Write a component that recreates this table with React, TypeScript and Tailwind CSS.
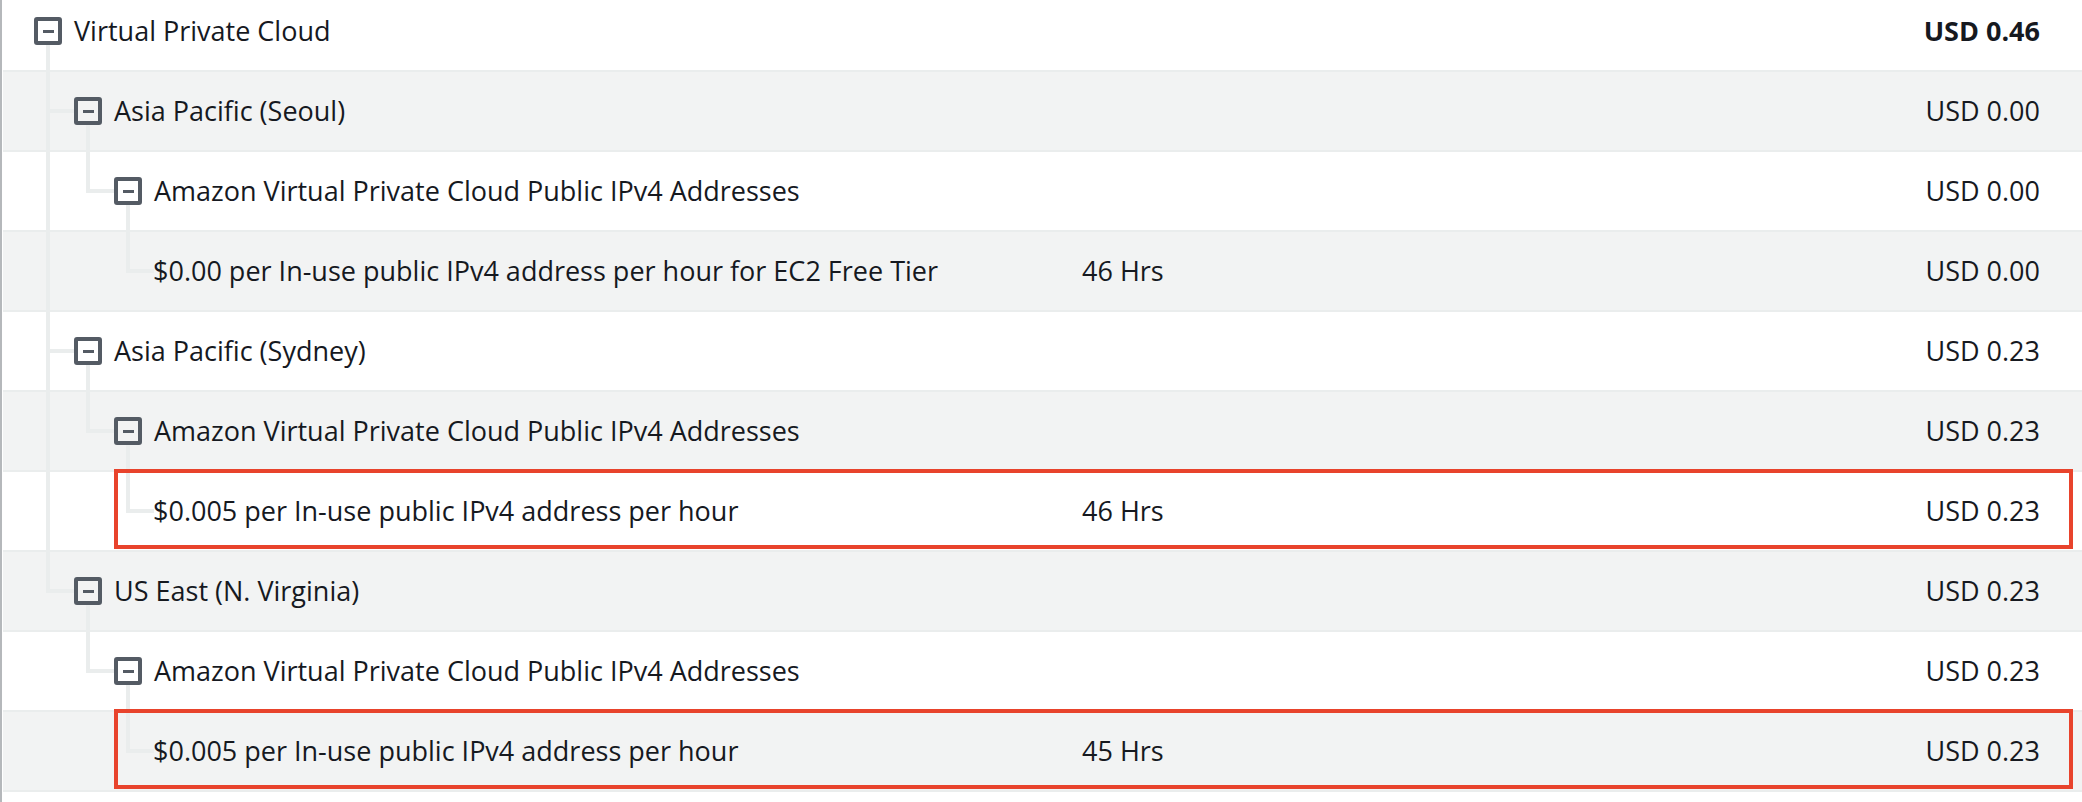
import React from "react";

type Row = {
  level: number;
  label: string;
  hrs?: string;
  amount: string;
  bold?: boolean;
  expanded?: boolean;
  guides: ("none" | "line" | "tee" | "elbow")[];
  flagged?: boolean;
};

const ROWS: Row[] = [
  { level: 0, label: "Virtual Private Cloud", amount: "USD 0.46", bold: true, expanded: true, guides: [] },
  { level: 1, label: "Asia Pacific (Seoul)", amount: "USD 0.00", expanded: true, guides: ["tee"] },
  { level: 2, label: "Amazon Virtual Private Cloud Public IPv4 Addresses", amount: "USD 0.00", expanded: true, guides: ["line", "elbow"] },
  { level: 3, label: "$0.00 per In-use public IPv4 address per hour for EC2 Free Tier", hrs: "46 Hrs", amount: "USD 0.00", guides: ["line", "none", "elbow"] },
  { level: 1, label: "Asia Pacific (Sydney)", amount: "USD 0.23", expanded: true, guides: ["tee"] },
  { level: 2, label: "Amazon Virtual Private Cloud Public IPv4 Addresses", amount: "USD 0.23", expanded: true, guides: ["line", "elbow"] },
  { level: 3, label: "$0.005 per In-use public IPv4 address per hour", hrs: "46 Hrs", amount: "USD 0.23", guides: ["line", "none", "elbow"], flagged: true },
  { level: 1, label: "US East (N. Virginia)", amount: "USD 0.23", expanded: true, guides: ["elbow"] },
  { level: 2, label: "Amazon Virtual Private Cloud Public IPv4 Addresses", amount: "USD 0.23", expanded: true, guides: ["none", "elbow"] },
  { level: 3, label: "$0.005 per In-use public IPv4 address per hour", hrs: "45 Hrs", amount: "USD 0.23", guides: ["none", "none", "elbow"], flagged: true },
];

function Guide({ kind }: { kind: "none" | "line" | "tee" | "elbow" }) {
  return (
    <div className="relative w-[40px] h-full shrink-0">
      {kind === "line" || kind === "tee" ? (
        <div className="absolute left-[18px] top-0 bottom-0 w-1 bg-[#eaeded]" />
      ) : null}
      {kind === "elbow" ? (
        <div className="absolute left-[18px] top-0 h-[41px] w-1 bg-[#eaeded]" />
      ) : null}
      {kind === "tee" || kind === "elbow" ? (
        <div className="absolute left-[22px] top-[37px] h-1 w-[24px] bg-[#eaeded]" />
      ) : null}
    </div>
  );
}

function Toggle({ hasLine }: { hasLine: boolean }) {
  return (
    <div className="relative w-[40px] h-full shrink-0 flex items-center">
      <div className="ml-[6px] w-[28px] h-[28px] rounded-[3px] border-[4px] border-[#545b64] flex items-center justify-center">
        <div className="w-[11px] h-[3px] bg-[#545b64]" />
      </div>
      {hasLine ? <div className="absolute left-[18px] top-[53px] bottom-0 w-1 bg-[#eaeded]" /> : null}
    </div>
  );
}

export default function App() {
  return (
    <div
      className="min-h-[802px] bg-white border-l-2 border-[#b5b8bb] pl-px overflow-hidden text-[#16191f]"
      style={{ fontFamily: '"Open Sans", "Noto Sans", sans-serif' }}
    >
      <div className="-mt-[8px]">
        {ROWS.map((row, i) => (
          <div
            key={i}
            className={`relative flex items-stretch h-[80px] border-b-2 border-[#eaeded] text-[27px] ${
              i % 2 === 1 ? "bg-[#f2f3f3]" : "bg-white"
            }`}
          >
            <div className="flex items-stretch w-[1079px] shrink-0 pl-[25px]">
              {row.guides.map((g, j) => (
                <Guide key={j} kind={g} />
              ))}
              {row.expanded ? (
                <>
                  <Toggle hasLine />
                  <span className="self-center ml-[6px] whitespace-nowrap">{row.label}</span>
                </>
              ) : (
                <span className="self-center pl-[5px] whitespace-nowrap">{row.label}</span>
              )}
            </div>
            <div className="flex-1 self-center whitespace-nowrap">{row.hrs ?? ""}</div>
            <div className={`self-center pr-[42px] whitespace-nowrap ${row.bold ? "font-bold" : ""}`}>
              {row.amount}
            </div>
            {row.flagged ? (
              <div className="absolute left-[111px] right-[9px] -top-[3px] h-[80px] border-[4px] border-[#e8432c] pointer-events-none" />
            ) : null}
          </div>
        ))}
      </div>
    </div>
  );
}
